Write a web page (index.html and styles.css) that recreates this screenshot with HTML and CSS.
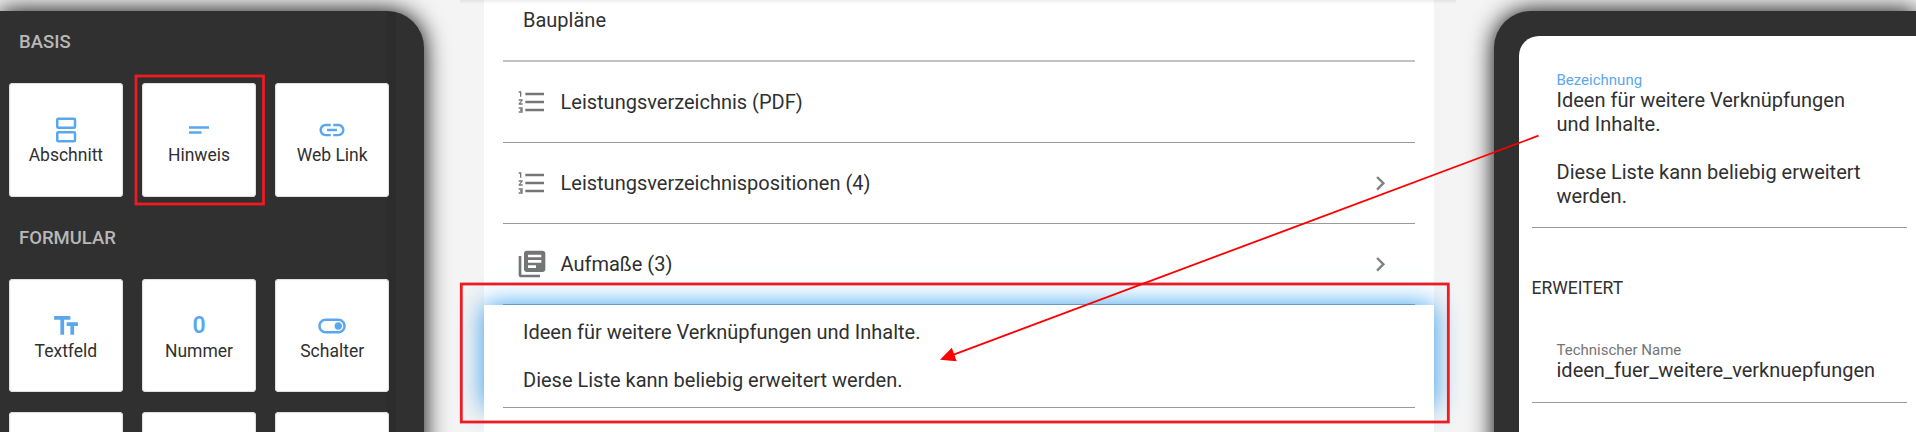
FILE: index.html
```html
<!DOCTYPE html>
<html lang="de">
<head>
<meta charset="utf-8">
<title>Formular-Editor</title>
<link rel="stylesheet" href="styles.css">
</head>
<body>
<svg class="defs" width="0" height="0">
  <symbol id="list" viewBox="0 0 24 24"><path d="M2 17h2v.5H3v1h1v.5H2v1h3v-4H2v1zm1-9h1V4H2v1h1v3zm-1 3h1.8L2 13.1v.9h3v-1H3.2L5 10.9V10H2v1zm5-6v2h14V5H7zm0 14h14v-2H7v2zm0-6h14v-2H7v2z"/></symbol>
  <symbol id="next" viewBox="0 0 24 24"><path d="M10 6L8.59 7.41 13.17 12l-4.58 4.59L10 18l6-6z"/></symbol>
</svg>
<div class="app">
  <aside class="palette">
    <h2 class="group">BASIS</h2>
    <div class="cards">
      <div class="card"><svg class="icon" viewBox="0 0 24 24"><g fill="none" stroke="currentColor" stroke-width="2"><rect x="5" y="3" width="14.2" height="7.2" rx=".8"/><rect x="5" y="13.8" width="14.2" height="7.2" rx=".8"/></g></svg><span>Abschnitt</span></div>
      <div class="card"><svg class="icon" viewBox="0 0 24 24"><path d="M4 9h16v2H4V9zm0 4h10v2H4v-2z"/></svg><span>Hinweis</span></div>
      <div class="card"><svg class="icon" viewBox="0 0 24 24"><path d="M3.9 12c0-1.71 1.39-3.1 3.1-3.1h4V7H7c-2.76 0-5 2.24-5 5s2.24 5 5 5h4v-1.9H7c-1.71 0-3.1-1.39-3.1-3.1zM8 13h8v-2H8v2zm9-6h-4v1.9h4c1.71 0 3.1 1.39 3.1 3.1s-1.39 3.1-3.1 3.1h-4V17h4c2.76 0 5-2.24 5-5s-2.24-5-5-5z"/></svg><span>Web Link</span></div>
    </div>
    <h2 class="group group-form">FORMULAR</h2>
    <div class="cards">
      <div class="card"><svg class="icon" viewBox="0 0 24 24"><path d="M2.5 4v3h5v12h3V7h5V4h-13zm19 5h-9v3h3v7h3v-7h3V9z"/></svg><span>Textfeld</span></div>
      <div class="card"><b class="icon zero">0</b><span>Nummer</span></div>
      <div class="card"><svg class="icon" viewBox="0 0 24 24"><path d="M17 6H7c-3.31 0-6 2.69-6 6s2.69 6 6 6h10c3.31 0 6-2.69 6-6s-2.69-6-6-6zm0 10H7c-2.21 0-4-1.79-4-4s1.79-4 4-4h10c2.21 0 4 1.79 4 4s-1.79 4-4 4zm0-7c-1.66 0-3 1.34-3 3s1.34 3 3 3 3-1.34 3-3-1.34-3-3-3z"/></svg><span>Schalter</span></div>
      <div class="card"></div>
      <div class="card"></div>
      <div class="card"></div>
    </div>
  </aside>

  <main class="preview">
    <div class="row row-head"><span>Baupläne</span></div>
    <div class="row"><svg class="row-icon"><use href="#list"/></svg><span>Leistungsverzeichnis (PDF)</span></div>
    <div class="row"><svg class="row-icon"><use href="#list"/></svg><span>Leistungsverzeichnispositionen (4)</span><svg class="chevron"><use href="#next"/></svg></div>
    <div class="row"><svg class="row-icon" viewBox="0 0 24 24"><path d="M4 6H2v14c0 1.1.9 2 2 2h14v-2H4V6zm16-4H8c-1.1 0-2 .9-2 2v12c0 1.1.9 2 2 2h12c1.1 0 2-.9 2-2V4c0-1.1-.9-2-2-2zm-1 9H9V9h10v2zm-4 4H9v-2h6v2zm4-8H9V5h10v2z"/></svg><span>Aufmaße (3)</span><svg class="chevron"><use href="#next"/></svg></div>
    <div class="note"><p>Ideen für weitere Verknüpfungen und Inhalte.</p><p>Diese Liste kann beliebig erweitert werden.</p></div>
    <div class="rest"></div>
  </main>

  <aside class="inspector">
    <div class="sheet">
      <div class="field">
        <span class="label label-active">Bezeichnung</span>
        <p class="value">Ideen für weitere Verknüpfungen<br>und Inhalte.<br><br>Diese Liste kann beliebig erweitert<br>werden.</p>
      </div>
      <h3 class="section">ERWEITERT</h3>
      <div class="field field-name">
        <span class="label">Technischer Name</span>
        <p class="value">ideen_fuer_weitere_verknuepfungen</p>
      </div>
    </div>
  </aside>
</div>
<div class="topshade"></div>
<svg class="marks" viewBox="0 0 1916 432">
  <rect x="136" y="76" width="127.5" height="128"/>
  <rect x="461.3" y="284" width="987" height="138"/>
  <path class="shaft" d="M1538.5 135.7L953 354.8"/>
  <path class="head" d="M940 359.7L951.8 347.8L956.7 361.3z"/>
</svg>
</body>
</html>
```
FILE: styles.css
```css
* { box-sizing: border-box; }
body {
  margin: 0;
  width: 1916px;
  height: 432px;
  overflow: hidden;
  background: #f4f4f4;
  font-family: Roboto, sans-serif;
  color: #303030;
}
h2, h3, p { margin: 0; font-weight: 400; }
svg { fill: currentColor; }
.defs { position: absolute; }
.app {
  display: flex;
  justify-content: space-between;
  height: 432px;
  overflow: hidden;
}

/* element palette */
.palette {
  width: 424px;
  height: 480px;
  margin-top: 10.5px;
  padding: 21px 0 0 9px;
  border-radius: 0 37px 0 0;
  background: linear-gradient(90deg, transparent 387px, #2c2c2c 387px, #2c2c2c 396px, transparent 396px) #303030;
  box-shadow: 0 0 25px #000;
}
.group {
  margin-left: 10px;
  height: 20px;
  line-height: 20px;
  font-size: 18.5px;
  font-weight: 500;
  color: #b8b8b8;
}
.group-form { margin-top: 31px; }
.cards {
  display: grid;
  grid-template-columns: repeat(3, 113.75px);
  grid-auto-rows: 113.75px;
  gap: 20px 19.4px;
  margin-top: 31.5px;
}
.group-form + .cards { margin-top: 30.8px; }
.card {
  display: flex;
  flex-direction: column;
  align-items: center;
  padding-top: 32px;
  border-radius: 4px;
  background: #fff;
  box-shadow: inset 0 0 1px 1px #ddd;
  font-size: 17.5px;
  line-height: 21px;
}
.icon { width: 30px; height: 30px; color: #5ba7ee; }
.zero { font-size: 23px; font-weight: 600; line-height: 30px; text-align: center; }

/* list preview */
.preview {
  display: flex;
  flex-direction: column;
  width: 950px;
  background: #fff;
  font-size: 20px;
}
.row {
  display: flex;
  align-items: center;
  flex: none;
  height: 81px;
  margin: 0 19px;
  padding: 0 20px 0 13px;
  border-bottom: 1px solid #9a9a9a;
}
.row-head { height: 62px; padding: 0 20px 20px; border-bottom: 2px solid #c2c2c2; }
.row-icon { width: 32px; height: 32px; margin-right: 12.5px; color: #757575; }
.chevron { width: 28.6px; height: 28.6px; margin-left: auto; color: #808080; }
.note {
  position: relative;
  flex: none;
  height: 103px;
  padding: 15px 39px 0;
  background: linear-gradient(#9a9a9a, #9a9a9a) 19px 102px / 912px 1px no-repeat #fff;
  box-shadow: 0 0 25px #2e9aed;
  line-height: 24px;
}
.note p + p { margin-top: 24px; }
.rest { position: relative; flex: 1; background: #fff; }

/* property inspector */
.inspector {
  width: 422px;
  height: 480px;
  margin-top: 10.5px;
  padding: 25px 0 0 25px;
  border-radius: 37px 0 0 0;
  background: #303030;
  box-shadow: 0 0 25px #000;
}
.sheet {
  height: 455px;
  padding: 35px 9.5px 0 12.5px;
  border-radius: 20px 0 0 0;
  background: #fff;
}
.field { height: 157px; padding-left: 25px; border-bottom: 1px solid #9a9a9a; }
.label { display: block; height: 17px; line-height: 18px; font-size: 15px; color: #757575; }
.label-active { color: #5ba7ee; }
.value { font-size: 20px; line-height: 24px; white-space: nowrap; }
.section { margin-top: 49px; font-size: 17.5px; line-height: 22px; }
.field-name { height: 62px; margin-top: 42px; }

/* annotations */
.topshade {
  position: absolute;
  inset: 0 460px auto;
  height: 4px;
  background: linear-gradient(rgba(0, 0, 0, .07), transparent);
}
.marks { position: absolute; left: 0; top: 0; width: 1916px; height: 432px; }
.marks rect { fill: none; stroke: #ed1c24; stroke-width: 2.8; }
.shaft { stroke: #f00; stroke-width: 1.8; }
.head { fill: #f00; }
```
